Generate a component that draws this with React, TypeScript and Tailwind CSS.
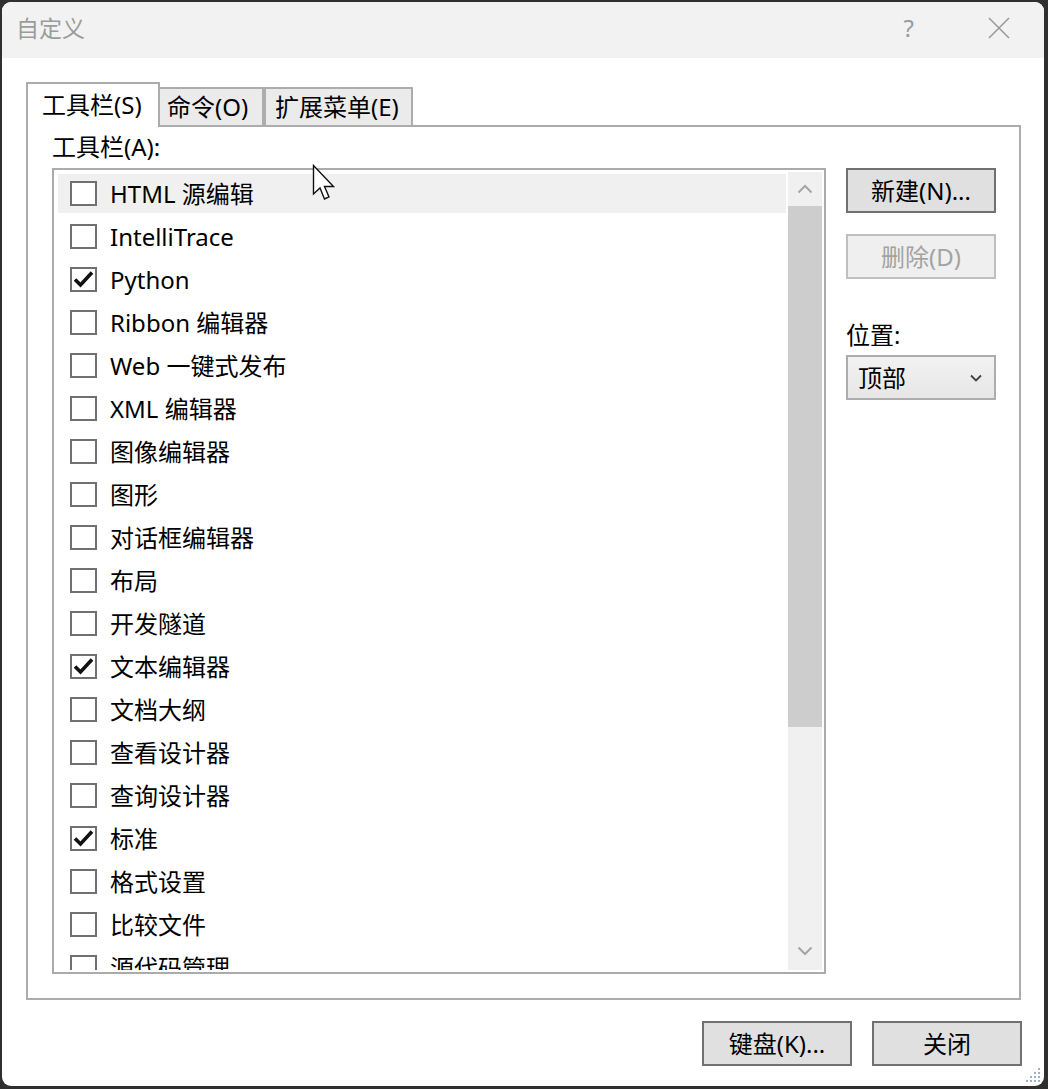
import React from "react";

const items: { label: string; checked: boolean }[] = [
  { label: "HTML 源编辑", checked: false },
  { label: "IntelliTrace", checked: false },
  { label: "Python", checked: true },
  { label: "Ribbon 编辑器", checked: false },
  { label: "Web 一键式发布", checked: false },
  { label: "XML 编辑器", checked: false },
  { label: "图像编辑器", checked: false },
  { label: "图形", checked: false },
  { label: "对话框编辑器", checked: false },
  { label: "布局", checked: false },
  { label: "开发隧道", checked: false },
  { label: "文本编辑器", checked: true },
  { label: "文档大纲", checked: false },
  { label: "查看设计器", checked: false },
  { label: "查询设计器", checked: false },
  { label: "标准", checked: true },
  { label: "格式设置", checked: false },
  { label: "比较文件", checked: false },
  { label: "源代码管理", checked: false },
];

const font = { fontFamily: "'Noto Sans', 'Noto Sans CJK SC', sans-serif" };

function CheckBox({ checked }: { checked: boolean }) {
  return (
    <div className="w-[27px] h-[25px] border-2 border-[#707070] bg-white flex items-center justify-center shrink-0">
      {checked && (
        <svg width="21" height="19" viewBox="0 0 21 19">
          <path d="M2 9.5 L7.5 15 L19 2.5" fill="none" stroke="#111" strokeWidth="3.6" />
        </svg>
      )}
    </div>
  );
}

function Row({ label, checked, hover }: { label: string; checked: boolean; hover?: boolean }) {
  return (
    <div className="h-[43px] py-[2px] shrink-0">
      <div className={`h-[39px] flex items-center pl-[12px] ${hover ? "bg-[#f0f0f0]" : ""}`}>
        <CheckBox checked={checked} />
        <span className="ml-[13px] text-[24px] leading-none text-black whitespace-nowrap">{label}</span>
      </div>
    </div>
  );
}

function Btn({ children, disabled }: { children: React.ReactNode; disabled?: boolean }) {
  return (
    <div
      className={`w-[150px] h-[45px] border-2 flex items-center justify-center text-[24px] leading-none ${
        disabled ? "border-[#bfbfbf] bg-[#efefef] text-[#a3a3a3]" : "border-[#707070] bg-[#e0e0e0] text-black"
      }`}
    >
      {children}
    </div>
  );
}

export default function App() {
  return (
    <div className="w-[1048px] h-[1089px] bg-[#2f2f2f] pl-[2px] pr-[4px] pt-[2px] pb-[3px]" style={font}>
      <div className="relative w-full h-full bg-white rounded-[9px] overflow-hidden flex flex-col">
        {/* Title bar */}
        <div className="h-[56px] bg-[#f2f2f2] flex items-center pb-[4px] shrink-0">
          <span className="ml-[14px] text-[23px] text-[#9b9b9b] leading-none">自定义</span>
          <div className="flex-1" />
          <span className="text-[24px] text-[#9b9b9b] leading-none mr-[74px]">?</span>
          <svg width="22" height="22" viewBox="0 0 22 22" className="mr-[34px]">
            <path d="M1 1 L21 21 M21 1 L1 21" stroke="#9b9b9b" strokeWidth="1.6" />
          </svg>
        </div>

        {/* Tabs */}
        <div className="mt-[22px] ml-[24px] flex items-end h-[45px] shrink-0">
          <div className="relative z-10 w-[134px] h-[45px] border-2 border-b-0 border-[#acacac] bg-white flex items-center pl-[14px] text-[24px] leading-none text-black -mb-[2px] pb-[2px]">
            工具栏(S)
          </div>
          <div className="w-[104px] h-[38px] border-2 border-l-0 border-b-0 border-[#acacac] bg-[#ebebeb] flex items-center pl-[7px] text-[24px] leading-none text-black">
            命令(O)
          </div>
          <div className="w-[149px] h-[38px] border-2 border-b-0 border-[#acacac] bg-[#ebebeb] flex items-center pl-[9px] text-[24px] leading-none text-black">
            扩展菜单(E)
          </div>
        </div>

        {/* Panel */}
        <div className="ml-[24px] w-[995px] h-[875px] border-2 border-[#acacac] flex pl-[24px] shrink-0">
          <div className="flex flex-col">
            <div className="h-[41px] pt-[7px] text-[24px] leading-[26px] text-black">工具栏(A):</div>
            <div className="w-[774px] h-[806px] border-2 border-[#ababab] pl-[4px] pr-[2px] pt-[2px] pb-[2px] flex">
              <div className="flex-1 overflow-hidden flex flex-col">
                {items.map((it, i) => (
                  <Row key={i} label={it.label} checked={it.checked} hover={i === 0} />
                ))}
              </div>
              <div className="w-[34px] ml-[2px] bg-[#f0f0f0] flex flex-col">
                <div className="h-[34px] flex items-center justify-center">
                  <svg width="16" height="10" viewBox="0 0 16 10">
                    <path d="M1.5 8.5 L8 2 L14.5 8.5" fill="none" stroke="#a5a5a5" strokeWidth="2" />
                  </svg>
                </div>
                <div className="h-[521px] bg-[#cdcdcd]" />
                <div className="flex-1" />
                <div className="h-[34px] flex items-center justify-center pb-[4px]">
                  <svg width="16" height="10" viewBox="0 0 16 10">
                    <path d="M1.5 1.5 L8 8 L14.5 1.5" fill="none" stroke="#a5a5a5" strokeWidth="2" />
                  </svg>
                </div>
              </div>
            </div>
          </div>

          <div className="ml-[20px] flex flex-col pt-[41px]">
            <Btn>新建(N)...</Btn>
            <div className="mt-[21px]">
              <Btn disabled>删除(D)</Btn>
            </div>
            <div className="mt-[43px] text-[24px] leading-[26px] text-black">位置:</div>
            <div className="mt-[7px] w-[150px] h-[45px] border-2 border-[#adadad] bg-gradient-to-b from-[#f2f2f2] to-[#e6e6e6] flex items-center pl-[10px] pr-[12px] text-[24px] leading-none text-black">
              <span className="flex-1">顶部</span>
              <svg width="12" height="8" viewBox="0 0 12 8">
                <path d="M1 1.5 L6 6.5 L11 1.5" fill="none" stroke="#404040" strokeWidth="1.8" />
              </svg>
            </div>
          </div>
        </div>

        {/* Bottom buttons */}
        <div className="mt-[21px] flex justify-end gap-[20px] pr-[22px]">
          <Btn>键盘(K)...</Btn>
          <Btn>关闭</Btn>
        </div>

        {/* Resize grip */}
        <svg width="20" height="20" viewBox="0 0 20 20" className="absolute right-[2px] bottom-[2px]">
          {[
            [16, 4],
            [12, 8], [16, 8],
            [8, 12], [12, 12], [16, 12],
            [4, 16], [8, 16], [12, 16], [16, 16],
          ].map(([x, y], i) => (
            <rect key={i} x={x} y={y} width="2" height="2" fill="#9fb0c4" />
          ))}
        </svg>

        {/* Mouse cursor */}
        <svg width="26" height="40" viewBox="0 0 26 40" className="absolute left-[310px] top-[162px]">
          <path
            d="M1.5 1.5 L1.5 30 L8 24 L12.5 35 L17 33 L12.5 22.5 L21.5 22.5 Z"
            fill="white"
            stroke="#111"
            strokeWidth="1.4"
            strokeLinejoin="miter"
          />
        </svg>
      </div>
    </div>
  );
}
